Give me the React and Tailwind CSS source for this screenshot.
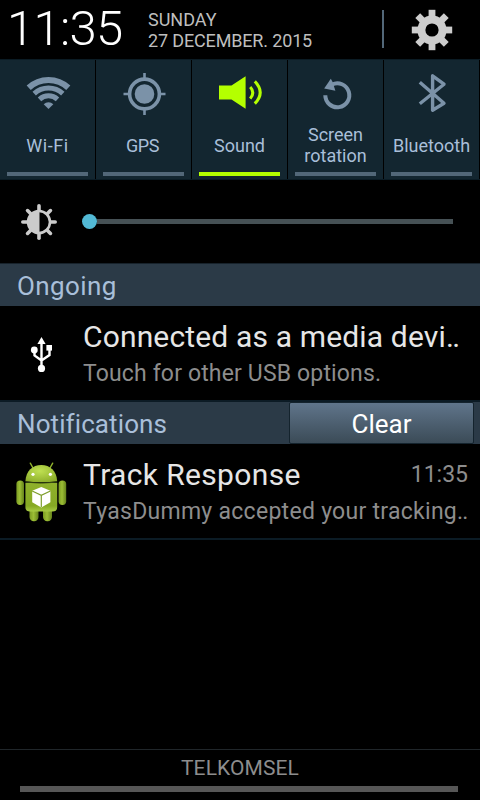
function Gear() {
  return (
    <svg className="block h-[42px] w-[42px]" viewBox="-21 -21 42 42" fill="#cdcdcd">
      {[0, 45, 90, 135].map((a) => (
        <rect key={a} x="-3.4" y="-20.2" width="6.8" height="40.4" transform={`rotate(${a})`} />
      ))}
      <circle r="14.6" />
      <circle r="6.6" fill="#000" />
    </svg>
  );
}

function WifiIcon() {
  return (
    <svg className="block h-[50px] w-[50px]" viewBox="23.5 68 50 50" fill="none" stroke="#7b92a8">
      <path d="M29.2 87.8A29 29 0 0 1 68.8 87.8" strokeWidth="6" />
      <path d="M34.7 93.6A21 21 0 0 1 63.3 93.6" strokeWidth="5" />
      <path d="M40 99.3A13.2 13.2 0 0 1 58 99.3" strokeWidth="5" />
      <path d="M44.2 104.2A7 7 0 0 1 53.8 104.2L49 109Z" fill="#7b92a8" stroke="none" />
    </svg>
  );
}

function GpsIcon() {
  return (
    <svg className="block h-[50px] w-[50px]" viewBox="-25.5 -26 50 50" fill="none" stroke="#7b92a8">
      <circle r="14.9" strokeWidth="3.6" />
      <circle r="9.8" fill="#7b92a8" stroke="none" />
      <path d="M0-21V-15M0 21V15M-21 0H-15M21 0H15" strokeWidth="2.6" />
    </svg>
  );
}

function SoundIcon() {
  return (
    <svg className="block h-[50px] w-[50px]" viewBox="215 68 50 50" fill="#b4ff00">
      <path d="M219 85.5H231.5L245.6 76.2V108.8L231.5 99.6H219Z" />
      <path d="M250.2 87Q255.4 92.5 250.2 98.6M254.8 81.4Q265.6 92.5 254.8 103.6" fill="none" stroke="#b4ff00" strokeWidth="3" />
    </svg>
  );
}

function RotateIcon() {
  return (
    <svg className="block h-[50px] w-[50px]" viewBox="311 68 50 50">
      <path d="M325.3 95.3A12 12 0 1 0 332 84.5" fill="none" stroke="#7b92a8" strokeWidth="4" />
      <path d="M324.2 88.6L330.8 78.8L332.6 82L335.4 90.8Z" fill="#7b92a8" />
    </svg>
  );
}

function BluetoothIcon() {
  return (
    <svg className="block h-[50px] w-[50px]" viewBox="407 68 50 50">
      <path d="M419.8 82.2L444 103.2L432.6 110.2V75.8L444 84.2L419.8 103.8" fill="none" stroke="#7b92a8" strokeWidth="3.4" strokeLinejoin="round" />
    </svg>
  );
}

function BrightnessIcon() {
  return (
    <svg className="block h-[38px] w-[38px]" viewBox="-19 -19 38 38" stroke="#cbcbcb" strokeLinecap="round">
      {[0, 45, 90, 135, 180, 225, 270, 315].map((a) => (
        <path key={a} d="M0-16.2V-12" strokeWidth="3.6" transform={`rotate(${a})`} />
      ))}
      <circle r="11" fill="none" strokeWidth="2.6" />
      <path d="M0.5-11A11 11 0 0 0 0.5 11Z" fill="#cbcbcb" stroke="none" />
    </svg>
  );
}

function UsbIcon() {
  return (
    <svg className="block h-[36px] w-[24px]" viewBox="30 336 24 36" fill="#fff">
      <path d="M41.5 337L45.6 344H37.4Z" />
      <path d="M41.5 343V369M34.5 350V355.5L41.5 360.5M49.5 348V355L41.5 360.5" fill="none" stroke="#fff" strokeWidth="2.4" />
      <circle cx="34.3" cy="350" r="3.4" />
      <rect x="46.4" y="345" width="5.6" height="5.6" />
      <circle cx="41.5" cy="368.4" r="3.6" />
    </svg>
  );
}

function AndroidIcon() {
  return (
    <svg className="block h-[60px] w-[52px]" viewBox="15 462 52 60">
      <defs>
        <linearGradient id="body" x1="0" y1="0" x2="0" y2="1">
          <stop offset="0" stopColor="#8fb12b" />
          <stop offset="0.8" stopColor="#86a924" />
          <stop offset="1" stopColor="#a9cc45" />
        </linearGradient>
        <linearGradient id="limb" x1="0" y1="0" x2="1" y2="0">
          <stop offset="0" stopColor="#7b9b22" />
          <stop offset="0.45" stopColor="#9cbe35" />
          <stop offset="1" stopColor="#64811a" />
        </linearGradient>
        <radialGradient id="head" cx="0.45" cy="0.35" r="0.7">
          <stop offset="0" stopColor="#bfe052" />
          <stop offset="1" stopColor="#8cad2a" />
        </radialGradient>
      </defs>
      <path d="M30.3 463.2L33 468M52.7 463.2L50 468" stroke="#90b32c" strokeWidth="1.4" strokeLinecap="round" />
      <rect x="29.5" y="504" width="9" height="17.2" rx="4.2" fill="url(#limb)" />
      <rect x="43" y="504" width="9" height="17.2" rx="4.2" fill="url(#limb)" />
      <rect x="16.4" y="480.4" width="7.6" height="24.6" rx="3.7" fill="url(#limb)" />
      <rect x="58.6" y="480.4" width="7.6" height="24.6" rx="3.7" fill="url(#limb)" />
      <path d="M25.4 483H57.2V507Q57.2 511.6 52.6 511.6H30Q25.4 511.6 25.4 507Z" fill="url(#body)" />
      <path d="M25.4 481.2C26 471 32.5 465 41.3 465S56.6 471 57.2 481.2Q41.3 483.2 25.4 481.2Z" fill="url(#head)" />
      <path d="M25.4 482.2Q41.3 484 57.2 482.2" fill="none" stroke="#364712" strokeWidth="1" />
      <circle cx="33" cy="474.3" r="1.6" fill="#fff" />
      <circle cx="50.4" cy="474.3" r="1.6" fill="#fff" />
      <path d="M41.3 487L50.4 490.8V502.2L41.3 507.4L32.2 502.2V490.8Z" fill="#fff" />
      <path d="M32.2 491L41.3 495.4L50.4 491M41.3 495.4V507" fill="none" stroke="#7e9e2b" strokeWidth="1.2" />
    </svg>
  );
}

const tiles = [
  { label: "Wi-Fi", icon: <WifiIcon />, text: "tracking-[0.6px]" },
  { label: "GPS", icon: <GpsIcon />, text: "tracking-[-0.4px] pr-[2px]" },
  { label: "Sound", icon: <SoundIcon />, on: true, text: "" },
  { label: "Screen rotation", icon: <RotateIcon />, text: "" },
  { label: "Bluetooth", icon: <BluetoothIcon />, text: "" },
];

function Tile({ label, icon, on, text }) {
  return (
    <div className="flex h-full w-24 flex-col items-center border-r border-black bg-[#132630] pt-2">
      {icon}
      <div className={`mt-[6px] flex h-[42px] w-[92px] items-center justify-center text-center text-[18px] leading-[21px] text-[#a9bfd9] ${text}`}>
        <span className={label === "Screen rotation" ? "w-[70px]" : ""}>{label}</span>
      </div>
      <div className={`mt-[6px] mr-px h-1 w-[81px] ${on ? "bg-[#b4ff00]" : "bg-[#526778]"}`} />
    </div>
  );
}

export default function App() {
  return (
    <div className="flex h-[800px] w-[480px] flex-col overflow-hidden whitespace-nowrap bg-black font-['Roboto',sans-serif]">
      <header className="flex h-[59px] shrink-0 items-start">
        <div className="w-[148px] pl-[7px] text-[49px] leading-[57px] font-light tracking-[-0.7px] text-white">11:35</div>
        <div className="w-[234px] pt-[9px] text-[18px] leading-[21px] text-[#bebebe]">
          <div>SUNDAY</div>
          <div className="tracking-[-0.15px]">27 DECEMBER. 2015</div>
        </div>
        <div className="mt-[10px] h-[38px] w-[2px] bg-[#526778]" />
        <div className="mt-[9px] ml-[27px]"><Gear /></div>
      </header>

      <div className="flex h-[121px] shrink-0 border-y border-[#0b1c25] whitespace-normal">
        {tiles.map((t) => <Tile key={t.label} {...t} />)}
      </div>

      <div className="flex h-[83px] shrink-0 items-center pl-5">
        <BrightnessIcon />
        <div className="ml-6 flex h-[15px] items-center">
          <div className="h-[15px] w-[15px] rounded-full bg-[#52b9d5]" />
          <div className="h-[5px] w-[356px] bg-[#465155]" />
        </div>
      </div>

      <div className="h-[43px] shrink-0 border-t border-[#17222b] bg-[#2b3a47] pl-[17px] text-[26px] leading-[44px] tracking-[0.4px] text-[#a9bfd9]">Ongoing</div>

      <div className="flex h-[96px] shrink-0 border-b-2 border-[#0c1b25]">
        <div className="w-[83px] pt-[30px] pl-[30px]"><UsbIcon /></div>
        <div className="pt-[13px]">
          <div className="text-[30px] leading-[36px] tracking-[0.15px] text-[#e6e6e6]">Connected as a media devi<span className="tracking-[-1.5px]">..</span></div>
          <div className="text-[23px] leading-[38px] tracking-[0.15px] text-[#8d8d8d]">Touch for other USB options.</div>
        </div>
      </div>

      <div className="flex h-[42px] shrink-0 bg-[#2b3a47]">
        <div className="w-[289px] pl-[17px] text-[26px] leading-[44px] tracking-[0.1px] text-[#a9bfd9]">Notifications</div>
        <div className="h-[42px] w-[185px] rounded-[2px] border border-[#14232d] bg-linear-to-b from-[#60758b] to-[#3b4b57] text-center text-[26px] leading-[42px] text-white">Clear</div>
      </div>

      <div className="flex h-[96px] shrink-0 border-b-2 border-[#0b1b25]">
        <div className="w-[83px] pt-[18px] pl-[15px]"><AndroidIcon /></div>
        <div className="w-[385px] pt-[13px]">
          <div className="flex justify-between">
            <div className="text-[30px] leading-[36px] tracking-[0.35px] text-[#e6e6e6]">Track Response</div>
            <div className="text-[23px] leading-[36px] text-[#8d8d8d]">11:35</div>
          </div>
          <div className="text-[23px] leading-[38px] tracking-[0.28px] text-[#8d8d8d]">TyasDummy accepted your tracking<span className="tracking-[-1px]">..</span></div>
        </div>
      </div>

      <div className="grow" />

      <footer className="flex h-[51px] shrink-0 flex-col border-t border-[#20262a]">
        <div className="text-center text-[21px] leading-[36px] tracking-[0.1px] text-[#8d8d8d]">TELKOMSEL</div>
        <div className="ml-5 h-[6px] w-[438px] bg-[#565656]" />
      </footer>
    </div>
  );
}
